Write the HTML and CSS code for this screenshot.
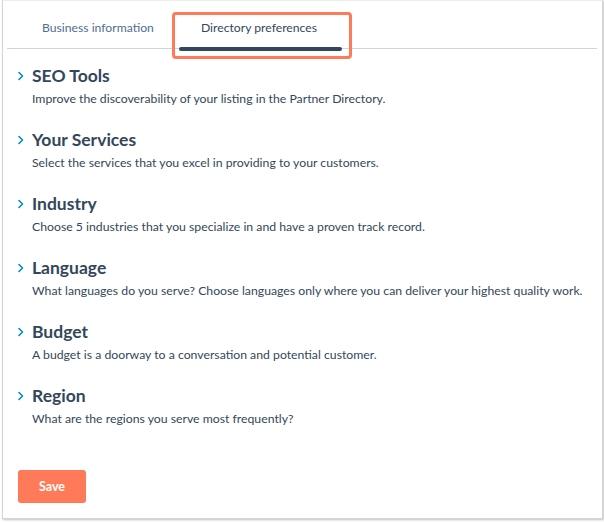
FILE: index.html
```html
<!DOCTYPE html>
<html>
<head>
<meta charset="utf-8">
<link rel="stylesheet" href="styles.css">
</head>
<body>
<div class="frame">
  <div class="tabs">
    <div class="tab">Business information</div>
    <div class="tab active">Directory preferences<span class="highlight"></span></div>
  </div>
  <div class="sections">
    <div class="section">
      <div class="title"><svg class="chev" viewBox="0 0 8 10"><path d="M2 1.5 L5.5 5 L2 8.5" /></svg>SEO Tools</div>
      <div class="desc">Improve the discoverability of your listing in the Partner Directory.</div>
    </div>
    <div class="section">
      <div class="title"><svg class="chev" viewBox="0 0 8 10"><path d="M2 1.5 L5.5 5 L2 8.5" /></svg>Your Services</div>
      <div class="desc">Select the services that you excel in providing to your customers.</div>
    </div>
    <div class="section">
      <div class="title"><svg class="chev" viewBox="0 0 8 10"><path d="M2 1.5 L5.5 5 L2 8.5" /></svg>Industry</div>
      <div class="desc">Choose 5 industries that you specialize in and have a proven track record.</div>
    </div>
    <div class="section">
      <div class="title"><svg class="chev" viewBox="0 0 8 10"><path d="M2 1.5 L5.5 5 L2 8.5" /></svg>Language</div>
      <div class="desc">What languages do you serve? Choose languages only where you can deliver your highest quality work.</div>
    </div>
    <div class="section">
      <div class="title"><svg class="chev" viewBox="0 0 8 10"><path d="M2 1.5 L5.5 5 L2 8.5" /></svg>Budget</div>
      <div class="desc">A budget is a doorway to a conversation and potential customer.</div>
    </div>
    <div class="section">
      <div class="title"><svg class="chev" viewBox="0 0 8 10"><path d="M2 1.5 L5.5 5 L2 8.5" /></svg>Region</div>
      <div class="desc">What are the regions you serve most frequently?</div>
    </div>
  </div>
  <button class="save">Save</button>
</div>
</body>
</html>
```
FILE: styles.css
```css
* { box-sizing: border-box; }
html, body { margin: 0; padding: 0; background: #ffffff; }
body {
  font-family: Lato, "Open Sans", sans-serif;
  color: #33475b;
  width: 604px;
  height: 522px;
  overflow: hidden;
}
.frame {
  margin-left: 2px;
  width: 601px;
  height: 519px;
  border: 1px solid #d4d4d4;
  border-top-color: #ececec;
  box-shadow: 1px 1px 2px rgba(0,0,0,0.25);
  padding: 0 5px 0 4px;
  position: relative;
}
.tabs {
  display: flex;
  border-bottom: 1px solid #cbd6e2;
  padding-left: 13px;
  height: 48px;
}
.tab {
  position: relative;
  padding: 18px 25px 0 22px;
  font-size: 12.2px;
  line-height: 18px;
  color: #516f90;
  height: 48px;
}
.tab.active {
  color: #33475b;
  padding-left: 22px;
  padding-right: 25px;
}
.tab.active::after {
  content: "";
  position: absolute;
  left: 0;
  right: 0;
  bottom: -2px;
  height: 4px;
  border-radius: 2px;
  background: #33475b;
}
.highlight {
  position: absolute;
  left: -7px;
  right: -10px;
  top: 11px;
  bottom: -10px;
  border: 3px solid #ff7a59;
  border-radius: 4px;
}
.sections {
  padding: 16px 0 0 10px;
  display: flex;
  flex-direction: column;
  gap: 21px;
}
.title {
  display: flex;
  align-items: center;
  font-size: 17.5px;
  font-weight: 700;
  line-height: 22px;
  color: #33475b;
}
.chev {
  width: 8px;
  height: 10px;
  margin-right: 7px;
  fill: none;
  stroke: #0091ae;
  stroke-width: 1.6;
  stroke-linecap: round;
  stroke-linejoin: round;
}
.desc {
  margin-top: 3px;
  padding-left: 15px;
  font-size: 12.25px;
  line-height: 18px;
  color: #33475b;
}
.save {
  display: block;
  margin: 42px 0 0 11px;
  width: 68px;
  height: 33px;
  border: none;
  border-radius: 3px;
  background: #ff7a59;
  color: #ffffff;
  font-family: Lato, "Open Sans", sans-serif;
  font-weight: 700;
  font-size: 12.5px;
}
```
